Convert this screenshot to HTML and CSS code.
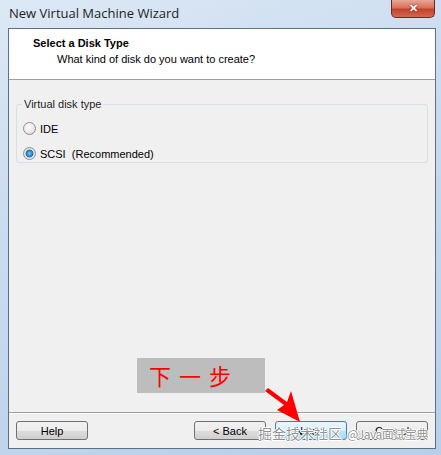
FILE: index.html
```html
<!DOCTYPE html>
<html lang="en">
<head>
  <meta charset="UTF-8">
  <meta name="viewport" content="width=device-width, initial-scale=1.0">
  <title>New Virtual Machine Wizard</title>
  <link rel="stylesheet" href="styles.css">
</head>
<body>
  <div class="window">
    <div class="titlebar">
      <span class="title">New Virtual Machine Wizard</span>
      <div class="close-btn">&#x2715;</div>
    </div>
    <div class="client">
      <div class="header">
        <h2>Select a Disk Type</h2>
        <p>What kind of disk do you want to create?</p>
      </div>
      <div class="content">
        <fieldset class="group">
          <legend>Virtual disk type</legend>
          <label class="radio-row"><span class="radio"></span>IDE</label>
          <label class="radio-row"><span class="radio checked"></span>SCSI&nbsp;&nbsp;(Recommended)</label>
        </fieldset>
      </div>
      <div class="footer">
        <button class="btn">Help</button>
        <div class="spacer"></div>
        <button class="btn">&lt; Back</button>
        <button class="btn focused">Next &gt;</button>
        <button class="btn">Cancel</button>
      </div>
    </div>
  </div>

  <div class="callout">下一步</div>
  <svg class="arrow" width="40" height="40" viewBox="0 0 40 40">
    <polygon points="1,3 4,0 23,14 27,3 36,34 13,22 20,17" fill="#ff0000"/>
  </svg>
  <div class="watermark">掘金技术社区<span class="tail">@Java面试宝典</span></div>
</body>
</html>
```

FILE: styles.css
```css
body {
  margin: 0;
  width: 441px;
  height: 455px;
  overflow: hidden;
  font-family: 'Liberation Sans', Arial, sans-serif;
  font-size: 11px;
  color: #000;
  background: linear-gradient(160deg, #dce8f5 0%, #c9dbef 40%, #b7cfe9 100%);
  position: relative;
}
.window {
  display: flex;
  flex-direction: column;
  height: 455px;
  box-sizing: border-box;
  padding: 0 5px 6px 8px;
}
.titlebar {
  height: 28px;
  display: flex;
  align-items: flex-start;
}
.title {
  font-family: 'Open Sans', sans-serif;
  font-size: 13px;
  padding: 4px 0 0 1px;
  color: #1e1e1e;
}
.close-btn {
  margin-left: auto;
  margin-right: 1px;
  width: 44px;
  height: 18px;
  box-sizing: border-box;
  border: 1px solid #6e2a22;
  border-top: none;
  border-radius: 0 0 5px 5px;
  background: linear-gradient(#e8a697 0%, #d7705d 45%, #c4402c 55%, #d06a4f 100%);
  color: #fff;
  font-weight: bold;
  font-size: 11px;
  text-align: center;
  line-height: 17px;
  text-shadow: 0 0 2px #5a1a10;
}
.client {
  flex: 1;
  display: flex;
  flex-direction: column;
  border: 1px solid #5e6f82;
  background: #f0f0f0;
}
.header {
  height: 51px;
  background: #fff;
  border-bottom: 1px solid #a0a0a0;
  padding: 6px 0 0 24px;
  box-sizing: border-box;
}
.header h2 {
  margin: 0;
  font-size: 11px;
  font-weight: bold;
  line-height: 16px;
}
.header p {
  margin: 1px 0 0 24px;
  line-height: 14px;
}
.content {
  flex: 1;
  padding: 18px 7px 0 7px;
}
.group {
  margin: 0;
  padding: 6px 0 4px 6px;
  border: 1px solid #d5dfe5;
  border-radius: 3px;
  height: 65px;
  box-sizing: border-box;
}
.group legend {
  padding: 0 2px;
  margin-left: -1px;
  color: #1e1e1e;
}
.radio-row {
  display: flex;
  align-items: center;
  height: 25px;
  gap: 4px;
}
.radio {
  width: 11px;
  height: 11px;
  border-radius: 50%;
  border: 1px solid #8e8f8f;
  background: radial-gradient(circle at 40% 35%, #ffffff 0%, #e8e8e8 60%, #cfcfcf 100%);
}
.radio.checked {
  background: radial-gradient(circle, #7fc7f2 0%, #1b6fa8 45%, #d8e4ee 55%, #f4f4f4 100%);
}
.footer {
  height: 35px;
  border-top: 1px solid #a0a0a0;
  box-shadow: inset 0 1px 0 #fff;
  display: flex;
  align-items: center;
  padding: 0 7px 0 7px;
  gap: 9px;
}
.spacer {
  flex: 1;
}
.btn {
  width: 72px;
  height: 19px;
  padding: 0;
  font-family: 'Liberation Sans', Arial, sans-serif;
  font-size: 11px;
  color: #000;
  border: 1px solid #707070;
  border-radius: 3px;
  background: linear-gradient(#f2f2f2 0%, #ebebeb 50%, #dddddd 51%, #cfcfcf 100%);
}
.btn.focused {
  border-color: #3c7fb1;
  background: linear-gradient(#eaf6fd 0%, #d9f0fc 50%, #bee6fd 51%, #a7d9f5 100%);
}
.callout {
  position: absolute;
  left: 137px;
  top: 358px;
  width: 128px;
  height: 35px;
  background: #bdbdbd;
  color: #f00;
  font-family: 'Noto Sans CJK SC', sans-serif;
  font-size: 22px;
  line-height: 35px;
  letter-spacing: 8px;
  padding-left: 12px;
  box-sizing: border-box;
}
.arrow {
  position: absolute;
  left: 264px;
  top: 388px;
}
.watermark {
  position: absolute;
  left: 258px;
  top: 423px;
  font-family: 'Noto Sans CJK SC', sans-serif;
  font-size: 14px;
  color: rgba(110, 110, 110, 0.75);
  text-shadow: 1px 0 0 #fff, -1px 0 0 #fff, 0 1px 0 #fff, 0 -1px 0 #fff;
  white-space: nowrap;
}
.watermark .tail {
  font-size: 12px;
  letter-spacing: -0.5px;
  margin-left: 5px;
}
```
